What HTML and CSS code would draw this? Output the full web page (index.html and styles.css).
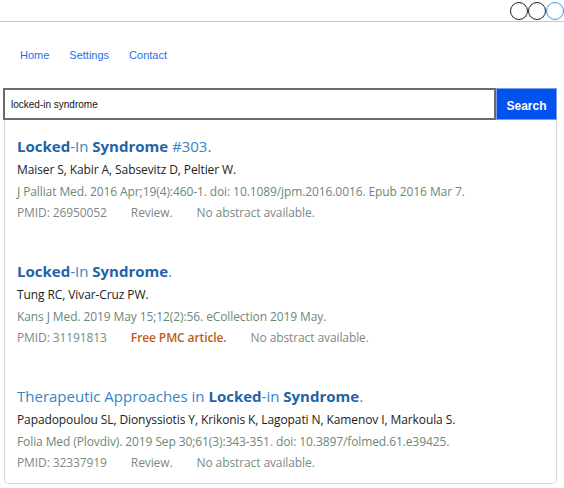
FILE: index.html
```html
<!DOCTYPE html>
<html>
<head>
<meta charset="utf-8">
<link rel="stylesheet" href="styles.css">
</head>
<body>
<header class="topbar">
  <span class="dot"></span><span class="dot"></span><span class="dot dot-active"></span>
</header>
<nav class="nav">
  <a href="#">Home</a>
  <a href="#">Settings</a>
  <a href="#">Contact</a>
</nav>
<main class="main">
  <form class="search">
    <input class="search-input" type="text" value="locked-in syndrome">
    <button class="search-btn" type="button">Search</button>
  </form>
  <section class="results">
    <article class="item">
      <div class="title"><b>Locked</b>-In <b>Syndrome</b> #303.</div>
      <div class="authors">Maiser S, Kabir A, Sabsevitz D, Peltier W.</div>
      <div class="journal">J Palliat Med. 2016 Apr;19(4):460-1. doi: 10.1089/jpm.2016.0016. Epub 2016 Mar 7.</div>
      <div class="meta"><span>PMID: 26950052</span><span>Review.</span><span>No abstract available.</span></div>
    </article>
    <article class="item">
      <div class="title"><b>Locked</b>-In <b>Syndrome</b>.</div>
      <div class="authors">Tung RC, Vivar-Cruz PW.</div>
      <div class="journal">Kans J Med. 2019 May 15;12(2):56. eCollection 2019 May.</div>
      <div class="meta"><span>PMID: 31191813</span><span class="free">Free PMC article.</span><span>No abstract available.</span></div>
    </article>
    <article class="item">
      <div class="title">Therapeutic Approaches in <b>Locked</b>-in <b>Syndrome</b>.</div>
      <div class="authors">Papadopoulou SL, Dionyssiotis Y, Krikonis K, Lagopati N, Kamenov I, Markoula S.</div>
      <div class="journal">Folia Med (Plovdiv). 2019 Sep 30;61(3):343-351. doi: 10.3897/folmed.61.e39425.</div>
      <div class="meta"><span>PMID: 32337919</span><span>Review.</span><span>No abstract available.</span></div>
    </article>
  </section>
</main>
</body>
</html>
```

FILE: styles.css
```css
* { box-sizing: border-box; }
body {
  margin: 0;
  background: #fff;
  font-family: "Open Sans", "Noto Sans", sans-serif;
}
.topbar {
  display: flex;
  justify-content: flex-end;
  align-items: center;
  height: 22px;
  padding-top: 1px;
  border-bottom: 1px solid #c8c8c8;
}
.dot {
  width: 18px;
  height: 18px;
  border: 1.5px solid #222;
  border-radius: 50%;
}
.dot-active { border-color: #3a9af5; }
.nav {
  display: flex;
  gap: 20px;
  padding: 27px 0 0 20px;
  height: 66px;
  font-family: "Liberation Sans", Arial, sans-serif;
  font-size: 11px;
}
.nav a {
  color: #2a6fe6;
  text-decoration: none;
}
.main {
  padding: 0 7px 0 3px;
}
.search {
  display: flex;
  height: 32px;
}
.search-input {
  flex: 1;
  margin: 0;
  border: 2px solid #6a6a6a;
  padding: 0 6px;
  font-family: "Liberation Sans", Arial, sans-serif;
  font-size: 10px;
  color: #111;
  outline: none;
}
.search-btn {
  width: 61px;
  margin: 0;
  background: #0053ef;
  color: #fff;
  border: 1px solid #7f9ee8;
  font-family: "Liberation Sans", Arial, sans-serif;
  font-weight: bold;
  font-size: 12px;
  padding: 3px 0 0;
}
.results {
  margin-left: 1px;
  border: 1px solid #d8d8d8;
  border-top: none;
  border-radius: 0 0 5px 5px;
  padding: 14px 12px 9px;
  display: flex;
  flex-direction: column;
  gap: 35px;
}
.title {
  font-size: 15px;
  line-height: 25px;
  color: #3385c8;
}
.title b {
  color: #1f63a8;
  font-weight: 700;
}
.authors, .journal, .meta {
  font-size: 12px;
  letter-spacing: -0.1px;
}
.authors {
  line-height: 22px;
  color: #222;
}
.journal {
  line-height: 21px;
  color: #6b8878;
}
.meta {
  line-height: 22px;
  color: #7c8a83;
  display: flex;
  gap: 24px;
}
.meta .free {
  color: #c05a18;
  font-weight: 600;
}
```
